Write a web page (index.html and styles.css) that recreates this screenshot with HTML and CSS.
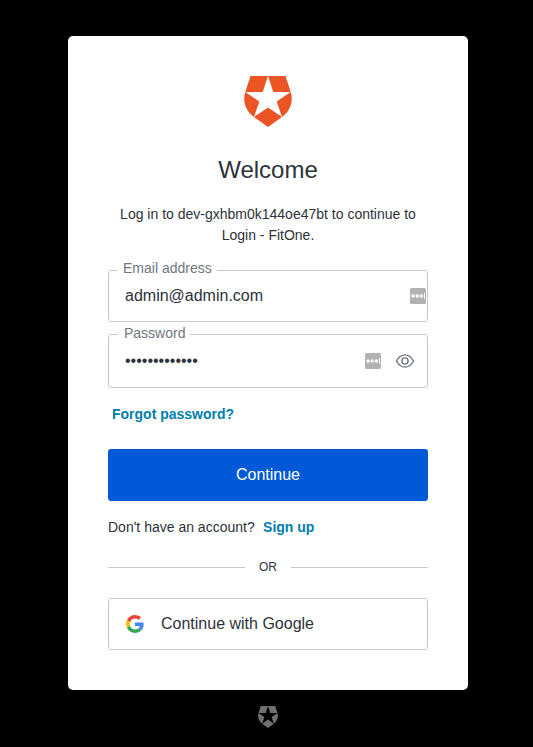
FILE: index.html
```html
<!DOCTYPE html>
<html lang="en">
<head>
<meta charset="utf-8">
<title>Log in</title>
<link rel="stylesheet" href="styles.css">
</head>
<body>
<main class="card">
  <svg class="logo" viewBox="0 0 48 51"><path fill="#eb5424" fill-rule="evenodd" d="M6.5 0H41.5L46.7 16C49.8 25.5 46 35.2 38 41L24 51L10 41C2 35.2-1.8 25.5 1.3 16ZM24 0L18.7 16H1.3L15.3 25.5L10 41L24 31.5L38 41L32.7 25.5L46.7 16H29.3Z"/></svg>
  <h1 class="title">Welcome</h1>
  <p class="intro">Log in to dev-gxhbm0k144oe47bt to continue to Login - FitOne.</p>
  <form class="form">
    <div class="field email">
      <span class="label">Email address</span>
      <span class="value">admin@admin.com</span>
      <svg class="manager" viewBox="0 0 16 16"><rect width="16" height="16" rx="1.5" fill="#b2b2b2"/><g fill="#fff"><circle cx="3" cy="8" r="1.7"/><circle cx="7.2" cy="8" r="1.7"/><circle cx="11.4" cy="8" r="1.7"/><path d="M14 5h.9v6H14z"/></g></svg>
    </div>
    <div class="field password">
      <span class="label">Password</span>
      <span class="value">•••••••••••••</span>
      <svg class="manager" viewBox="0 0 16 16"><rect width="16" height="16" rx="1.5" fill="#b2b2b2"/><g fill="#fff"><circle cx="3" cy="8" r="1.7"/><circle cx="7.2" cy="8" r="1.7"/><circle cx="11.4" cy="8" r="1.7"/><path d="M14 5h.9v6H14z"/></g></svg>
      <svg class="eye" viewBox="0 0 20 14" fill="none" stroke="#6f7780" stroke-width="1.4"><path d="M1.5 7C3.8 2.8 6.8.9 10 .9S16.2 2.8 18.5 7C16.2 11.2 13.2 13.1 10 13.1S3.8 11.2 1.5 7Z"/><circle cx="10" cy="7" r="3.1"/></svg>
    </div>
    <a class="link forgot">Forgot password?</a>
    <button class="continue" type="button">Continue</button>
  </form>
  <p class="signup">Don't have an account? <a class="link">Sign up</a></p>
  <div class="divider">OR</div>
  <button class="google" type="button">
    <svg class="google-icon" viewBox="0 0 48 48"><path fill="#ea4335" d="M24 9.5c3.54 0 6.71 1.22 9.21 3.6l6.85-6.85C35.9 2.38 30.47 0 24 0 14.62 0 6.51 5.38 2.56 13.22l7.98 6.19C12.43 13.72 17.74 9.5 24 9.5z"/><path fill="#4285f4" d="M46.98 24.55c0-1.57-.15-3.09-.38-4.55H24v9.02h12.94c-.58 2.96-2.26 5.48-4.78 7.18l7.73 6c4.51-4.18 7.09-10.36 7.09-17.65z"/><path fill="#fbbc05" d="M10.53 28.59c-.48-1.45-.76-2.99-.76-4.59s.27-3.14.76-4.59l-7.98-6.19C.92 16.46 0 20.12 0 24c0 3.88.92 7.54 2.56 10.78l7.97-6.19z"/><path fill="#34a853" d="M24 48c6.48 0 11.93-2.13 15.89-5.81l-7.73-6c-2.15 1.45-4.92 2.3-8.16 2.3-6.26 0-11.57-4.22-13.47-9.91l-7.98 6.19C6.51 42.62 14.62 48 24 48z"/></svg>
    <span class="google-text">Continue with Google</span>
  </button>
</main>
<svg class="badge" viewBox="0 0 48 51" preserveAspectRatio="none"><path fill="#707070" fill-rule="evenodd" d="M6.5 0H41.5L46.7 16C49.8 25.5 46 35.2 38 41L24 51L10 41C2 35.2-1.8 25.5 1.3 16ZM24 0L18.7 16H1.3L15.3 25.5L10 41L24 31.5L38 41L32.7 25.5L46.7 16H29.3Z"/></svg>
</body>
</html>
```
FILE: styles.css
```css
* {
  box-sizing: border-box;
}

body {
  margin: 0;
  padding: 36px 65px 0 68px;
  height: 747px;
  overflow: hidden;
  background: #000;
  color: #2d333a;
  font: 14px/21px "Liberation Sans", Arial, sans-serif;
}

.card {
  width: 400px;
  height: 654px;
  padding: 40px;
  border-radius: 5px;
  background: #fff;
}

.logo {
  display: block;
  width: 48px;
  height: 51px;
  margin: 0 auto;
}

.title {
  margin: 27px 0 0;
  font-size: 24px;
  font-weight: 400;
  line-height: 32px;
  text-align: center;
}

.intro {
  width: 300px;
  margin: 18px auto 24px;
  text-align: center;
}

.form {
  display: flex;
  flex-direction: column;
}

.field {
  position: relative;
  display: flex;
  align-items: center;
  height: 52px;
  padding-left: 16px;
  border: 1px solid #c2c8d0;
  border-radius: 3px;
  font-size: 16px;
}

.password {
  height: 54px;
  margin-top: 12px;
  padding-right: 12px;
}

.label {
  position: absolute;
  top: -13px;
  left: 8px;
  padding: 0 5px 0 6px;
  background: #fff;
  color: #6f7780;
  font-size: 14px;
}

.password .label {
  top: -12px;
  left: 9px;
}

.value {
  flex: 1;
  padding-bottom: 2px;
}

.manager {
  width: 16px;
  height: 16px;
}

.email .manager {
  margin-right: 1px;
}

.eye {
  width: 20px;
  height: 14px;
  margin-left: 14px;
  margin-bottom: 1px;
}

.link {
  color: #007ead;
  font-weight: 700;
}

.forgot {
  margin: 16px 0 24px 4px;
}

.continue {
  height: 52px;
  padding: 0 0 2px;
  border: 0;
  border-radius: 3px;
  background: #0059d6;
  color: #fff;
  font: inherit;
  font-size: 16px;
}

.signup {
  margin: 16px 0 0;
}

.signup .link {
  margin-left: 4.5px;
}

.divider {
  display: flex;
  align-items: center;
  gap: 14px;
  margin-top: 20px;
  font-size: 12px;
  line-height: 19px;
}

.divider::before,
.divider::after {
  content: "";
  flex: 1;
  height: 1px;
  background: #c2c8d0;
}

.google {
  display: flex;
  align-items: center;
  gap: 17px;
  width: 100%;
  height: 52px;
  margin-top: 21px;
  padding: 0 17px;
  border: 1px solid #c2c8d0;
  border-radius: 3px;
  background: #fff;
  color: inherit;
  font: inherit;
  font-size: 16px;
}

.google-icon {
  width: 18px;
  height: 18px;
}

.google-text {
  padding-bottom: 2px;
}

.badge {
  display: block;
  width: 20px;
  height: 22px;
  margin: 16px auto 0;
}
```
